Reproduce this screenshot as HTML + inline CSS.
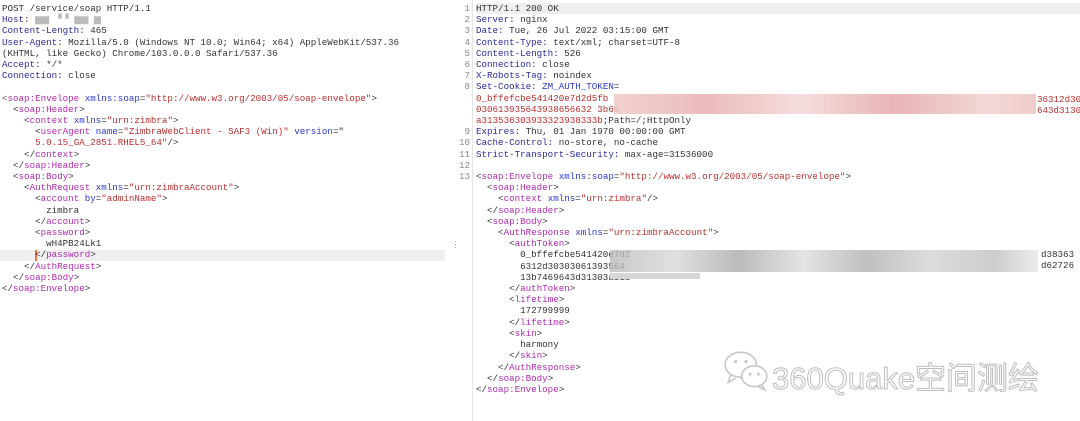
<!DOCTYPE html>
<html><head><meta charset="utf-8"><style>
body{margin:0;width:1080px;height:421px;background:#fff;overflow:hidden;position:relative;font-family:"Liberation Mono",monospace;}
pre{margin:0;position:absolute;font-family:"Liberation Mono",monospace;font-size:9.2px;line-height:11.2px;color:#333;}
.h{color:#2c2c9c}.t{color:#b02cb0}.a{color:#2c38c8}.v{color:#b83030}.p{color:#555}
.blur{position:absolute;}
</style></head><body>
<div style="position:absolute;left:0;top:250px;width:445px;height:11px;background:#efefef"></div>
<div style="position:absolute;left:35px;top:250px;width:2px;height:11px;background:#f07040"></div>
<div style="position:absolute;left:476px;top:3px;width:604px;height:11px;background:#efefef"></div>
<div style="position:absolute;left:472px;top:0;width:1px;height:421px;background:#e4e4e4"></div>
<div style="position:absolute;left:454px;top:240px;color:#999;font-size:9px;line-height:3px;font-family:'Liberation Sans',sans-serif">·<br>·<br>·</div>
<pre style="left:2px;top:3px"><span>POST /service/soap HTTP/1.1</span>
<span class="h">Host:</span> <span style="color:#bbb">▆▆ ▝▝ ▆▆ ▆</span>
<span class="h">Content-Length:</span> 465
<span class="h">User-Agent:</span> Mozilla/5.0 (Windows NT 10.0; Win64; x64) AppleWebKit/537.36
(KHTML, like Gecko) Chrome/103.0.0.0 Safari/537.36
<span class="h">Accept:</span> */*
<span class="h">Connection:</span> close

<span class="p">&lt;</span><span class="t">soap:Envelope</span> <span class="a">xmlns:soap</span>=<span class="v">"http://www.w3.org/2003/05/soap-envelope"</span>&gt;
  &lt;<span class="t">soap:Header</span>&gt;
    &lt;<span class="t">context</span> <span class="a">xmlns</span>=<span class="v">"urn:zimbra"</span>&gt;
      &lt;<span class="t">userAgent</span> <span class="a">name</span>=<span class="v">"ZimbraWebClient - SAF3 (Win)"</span> <span class="a">version</span>="
      <span class="v">5.0.15_GA_2851.RHEL5_64"</span>/&gt;
    &lt;/<span class="t">context</span>&gt;
  &lt;/<span class="t">soap:Header</span>&gt;
  &lt;<span class="t">soap:Body</span>&gt;
    &lt;<span class="t">AuthRequest</span> <span class="a">xmlns</span>=<span class="v">"urn:zimbraAccount"</span>&gt;
      &lt;<span class="t">account</span> <span class="a">by</span>=<span class="v">"adminName"</span>&gt;
        zimbra
      &lt;/<span class="t">account</span>&gt;
      &lt;<span class="t">password</span>&gt;
        wH4PB24Lk1
      &lt;/<span class="t">password</span>&gt;
    &lt;/<span class="t">AuthRequest</span>&gt;
  &lt;/<span class="t">soap:Body</span>&gt;
&lt;/<span class="t">soap:Envelope</span>&gt;</pre>
<pre style="left:458px;top:3px;color:#888;text-align:right;width:12px;"> 1
 2
 3
 4
 5
 6
 7
 8



 9
10
11
12
13</pre>
<pre style="left:476px;top:3px">HTTP/1.1 200 OK
<span class="h">Server:</span> nginx
<span class="h">Date:</span> Tue, 26 Jul 2022 03:15:00 GMT
<span class="h">Content-Type:</span> text/xml; charset=UTF-8
<span class="h">Content-Length:</span> 526
<span class="h">Connection:</span> close
<span class="h">X-Robots-Tag:</span> noindex
<span class="h">Set-Cookie:</span> <span class="a">ZM_AUTH_TOKEN</span>=
<span class="v">0_bffefcbe541420e7d2d5fb</span>
<span class="v">030613935643938656632 3b6e</span>
<span class="v">a313536303933323938333b</span>;Path=/;HttpOnly
<span class="h">Expires:</span> Thu, 01 Jan 1970 00:00:00 GMT
<span class="h">Cache-Control:</span> no-store, no-cache
<span class="h">Strict-Transport-Security:</span> max-age=31536000

&lt;<span class="t">soap:Envelope</span> <span class="a">xmlns:soap</span>=<span class="v">"http://www.w3.org/2003/05/soap-envelope"</span>&gt;
  &lt;<span class="t">soap:Header</span>&gt;
    &lt;<span class="t">context</span> <span class="a">xmlns</span>=<span class="v">"urn:zimbra"</span>/&gt;
  &lt;/<span class="t">soap:Header</span>&gt;
  &lt;<span class="t">soap:Body</span>&gt;
    &lt;<span class="t">AuthResponse</span> <span class="a">xmlns</span>=<span class="v">"urn:zimbraAccount"</span>&gt;
      &lt;<span class="t">authToken</span>&gt;
        0_bffefcbe541420e7d2
        6312d30303061393564
        13b7469643d31303a313
      &lt;/<span class="t">authToken</span>&gt;
      &lt;<span class="t">lifetime</span>&gt;
        172799999
      &lt;/<span class="t">lifetime</span>&gt;
      &lt;<span class="t">skin</span>&gt;
        harmony
      &lt;/<span class="t">skin</span>&gt;
    &lt;/<span class="t">AuthResponse</span>&gt;
  &lt;/<span class="t">soap:Body</span>&gt;
&lt;/<span class="t">soap:Envelope</span>&gt;</pre>
<!-- blurred cookie -->
<div class="blur" style="left:614px;top:94px;width:466px;height:20px;background:linear-gradient(90deg,#f0c8c8,#e8b0b0 20%,#f4d8d8 40%,#e4a8a8 60%,#f2d0d0 80%,#e8b8b8);opacity:.85"></div>
<div class="blur" style="left:1036px;top:94px;width:44px;height:20px;background:#fff"></div>
<pre style="left:1037px;top:94px"><span class="v">36312d30
643d3130</span></pre>
<!-- blurred token -->
<div class="blur" style="left:610px;top:250px;width:428px;height:22px;background:linear-gradient(90deg,#bbb,#d8d8d8 15%,#aaa 30%,#ddd 45%,#b0b0b0 60%,#d4d4d4 75%,#c0c0c0 90%,#e8e8e8);opacity:.8"></div>
<div class="blur" style="left:610px;top:273px;width:90px;height:6px;background:#d6d6d6"></div>
<pre style="left:1041px;top:249px">d38363
d62726</pre>
<!-- watermark -->
<svg style="position:absolute;left:722px;top:350px" width="50" height="42" viewBox="0 0 48 40"><g fill="none" stroke="#c8c8c8" stroke-width="1.6"><ellipse cx="18" cy="14" rx="15" ry="12"/><path d="M8 24 l-2 7 7-4"/><ellipse cx="31" cy="25" rx="12" ry="10" fill="#fff"/><path d="M38 33 l3 5 -6-3"/></g><g fill="#c8c8c8"><circle cx="13" cy="11" r="1.6"/><circle cx="23" cy="11" r="1.6"/><circle cx="27" cy="23" r="1.4"/><circle cx="35" cy="23" r="1.4"/></g></svg>
<div style="position:absolute;left:772px;top:353px;font-family:'Liberation Sans','Noto Sans CJK SC',sans-serif;font-size:31px;color:#fff;-webkit-text-stroke:1px #bdbdbd;white-space:nowrap">360Quake空间测绘</div>
</body></html>
